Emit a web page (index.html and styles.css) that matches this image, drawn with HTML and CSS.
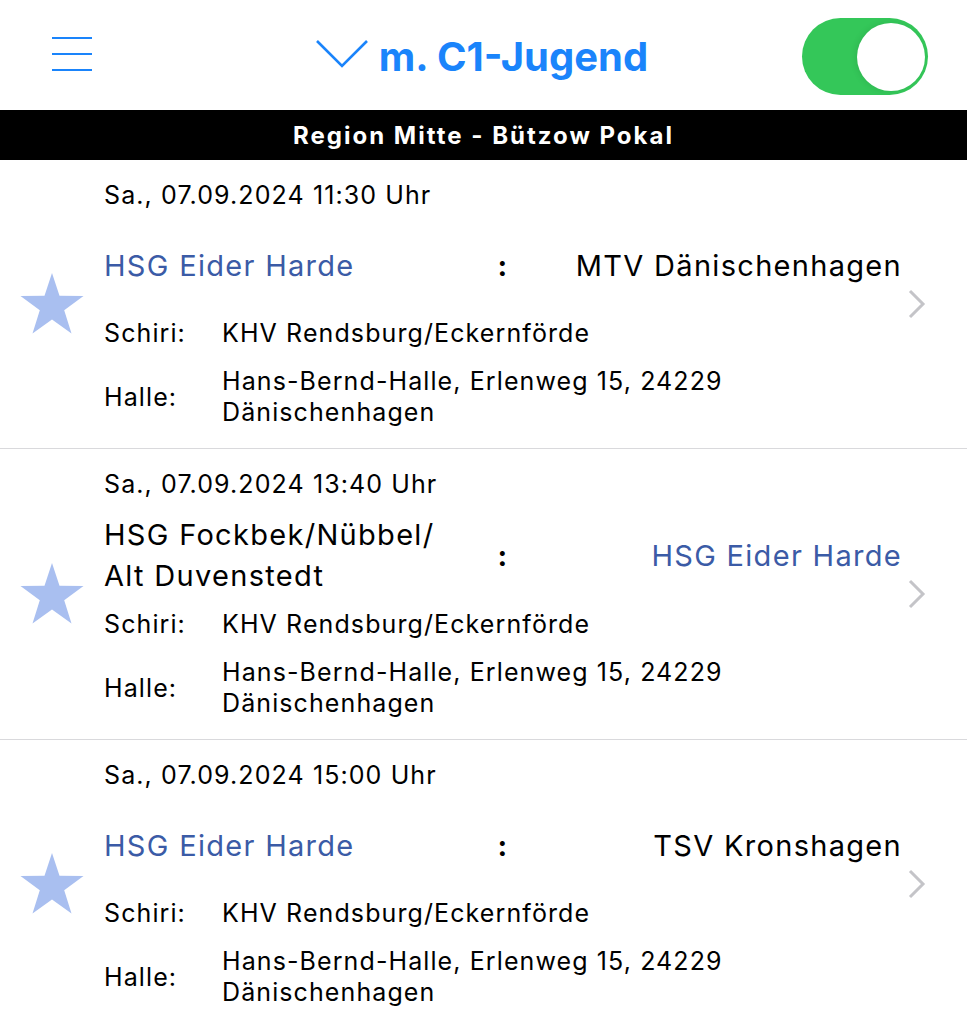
FILE: index.html
```html
<!DOCTYPE html>
<html lang="de">
<head>
    <meta charset="UTF-8">
    <meta name="viewport" content="width=device-width, initial-scale=1.0">
    <title>Spielplan</title>
    <link rel="stylesheet" href="styles.css">
</head>
<body>
    <div class="topbar">
        <button class="menu-button" aria-label="Menü">
            <span></span><span></span><span></span>
        </button>
        <div class="title">
            <svg class="title-chevron" width="54" height="30" viewBox="0 0 54 30">
                <path d="M2 2 L27 27 L52 2" fill="none" stroke="currentColor" stroke-width="2.6"/>
            </svg>
            <span>m. C1-Jugend</span>
        </div>
        <div class="toggle on"><div class="knob"></div></div>
    </div>

    <div class="section-bar">Region Mitte - Bützow Pokal</div>

    <div class="game-list">
        <div class="game">
            <svg class="star" width="64" height="62" viewBox="0 0 64 62">
                <path d="M32 0 L39.5 22.8 L63.5 23 L44.2 37.3 L51.5 60.5 L32 46.5 L12.5 60.5 L19.8 37.3 L0.5 23 L24.5 22.8 Z"/>
            </svg>
            <div class="game-body">
                <div class="date">Sa., 07.09.2024 11:30 Uhr</div>
                <div class="teams">
                    <div class="team home own">HSG Eider Harde</div>
                    <div class="colon">:</div>
                    <div class="team away">MTV Dänischenhagen</div>
                </div>
                <div class="info schiri">
                    <div class="label">Schiri:</div>
                    <div class="value">KHV Rendsburg/Eckernförde</div>
                </div>
                <div class="info halle">
                    <div class="label">Halle:</div>
                    <div class="value">Hans-Bernd-Halle, Erlenweg 15, 24229 Dänischenhagen</div>
                </div>
            </div>
            <svg class="disclosure" width="18" height="30" viewBox="0 0 18 30">
                <path d="M2 2 L15 15 L2 28" fill="none" stroke="currentColor" stroke-width="3"/>
            </svg>
        </div>

        <div class="game">
            <svg class="star" width="64" height="62" viewBox="0 0 64 62">
                <path d="M32 0 L39.5 22.8 L63.5 23 L44.2 37.3 L51.5 60.5 L32 46.5 L12.5 60.5 L19.8 37.3 L0.5 23 L24.5 22.8 Z"/>
            </svg>
            <div class="game-body">
                <div class="date">Sa., 07.09.2024 13:40 Uhr</div>
                <div class="teams">
                    <div class="team home">HSG Fockbek/Nübbel/ Alt Duvenstedt</div>
                    <div class="colon">:</div>
                    <div class="team away own">HSG Eider Harde</div>
                </div>
                <div class="info schiri">
                    <div class="label">Schiri:</div>
                    <div class="value">KHV Rendsburg/Eckernförde</div>
                </div>
                <div class="info halle">
                    <div class="label">Halle:</div>
                    <div class="value">Hans-Bernd-Halle, Erlenweg 15, 24229 Dänischenhagen</div>
                </div>
            </div>
            <svg class="disclosure" width="18" height="30" viewBox="0 0 18 30">
                <path d="M2 2 L15 15 L2 28" fill="none" stroke="currentColor" stroke-width="3"/>
            </svg>
        </div>

        <div class="game">
            <svg class="star" width="64" height="62" viewBox="0 0 64 62">
                <path d="M32 0 L39.5 22.8 L63.5 23 L44.2 37.3 L51.5 60.5 L32 46.5 L12.5 60.5 L19.8 37.3 L0.5 23 L24.5 22.8 Z"/>
            </svg>
            <div class="game-body">
                <div class="date">Sa., 07.09.2024 15:00 Uhr</div>
                <div class="teams">
                    <div class="team home own">HSG Eider Harde</div>
                    <div class="colon">:</div>
                    <div class="team away">TSV Kronshagen</div>
                </div>
                <div class="info schiri">
                    <div class="label">Schiri:</div>
                    <div class="value">KHV Rendsburg/Eckernförde</div>
                </div>
                <div class="info halle">
                    <div class="label">Halle:</div>
                    <div class="value">Hans-Bernd-Halle, Erlenweg 15, 24229 Dänischenhagen</div>
                </div>
            </div>
            <svg class="disclosure" width="18" height="30" viewBox="0 0 18 30">
                <path d="M2 2 L15 15 L2 28" fill="none" stroke="currentColor" stroke-width="3"/>
            </svg>
        </div>
    </div>
</body>
</html>
```

FILE: styles.css
```css
:root {
    --ios-blue: #1a84fb;
    --ios-green: #34c759;
    --team-blue: #3b5ba6;
    --star-blue: #a9bff0;
    --separator: #d9d9dc;
    --text-color: #000;
}

* {
    box-sizing: border-box;
}

body {
    margin: 0;
    font-family: Inter, 'Liberation Sans', Arial, sans-serif;
    color: var(--text-color);
    background: #fff;
}

.topbar {
    height: 110px;
    display: grid;
    grid-template-columns: 1fr auto 1fr;
    align-items: center;
}

.menu-button {
    justify-self: start;
    width: 40px;
    height: 34px;
    padding: 0;
    margin: -2px 0 0 52px;
    border: none;
    background: none;
    display: flex;
    flex-direction: column;
    justify-content: space-between;
}

.menu-button span {
    display: block;
    height: 2px;
    width: 40px;
    background: var(--ios-blue);
}

.title {
    display: flex;
    align-items: center;
    gap: 10px;
    color: var(--ios-blue);
    font-size: 40px;
    font-weight: 700;
    margin: 2px 4px 0 0;
}

.title-chevron {
    margin-top: -4px;
}

.toggle {
    justify-self: end;
    width: 126px;
    height: 77px;
    margin: 2px 39px 0 0;
    border-radius: 40px;
    background: var(--ios-green);
    position: relative;
}

.toggle .knob {
    position: absolute;
    top: 5px;
    right: 3px;
    width: 68px;
    height: 68px;
    border-radius: 50%;
    background: #fff;
    box-shadow: -2px 0 6px rgba(0,0,0,0.08);
}

.section-bar {
    height: 50px;
    background: #000;
    color: #fff;
    font-size: 24px;
    font-weight: 700;
    letter-spacing: 2px;
    display: flex;
    align-items: center;
    justify-content: center;
}

.game {
    display: flex;
    align-items: center;
    padding: 20px 0 20px 20px;
    border-bottom: 1px solid var(--separator);
}

.star {
    flex: none;
    fill: var(--star-blue);
    margin-right: 20px;
}

.game-body {
    flex: 1;
    display: flex;
    flex-direction: column;
}

.disclosure {
    flex: none;
    color: #c4c4c8;
    margin: 0 41px 0 6px;
}

.date {
    font-size: 25px;
    line-height: 30px;
    letter-spacing: 1.1px;
}

.teams {
    display: grid;
    grid-template-columns: 1fr auto 1fr;
    align-items: center;
    min-height: 80px;
    margin-top: 15px;
    font-size: 29px;
    line-height: 41px;
    letter-spacing: 1.3px;
}

.team.home {
    padding-right: 40px;
}

.team.away {
    text-align: right;
}

.team.own {
    color: var(--team-blue);
}

.colon {
    font-weight: 700;
    padding: 0 14px;
}

.info {
    display: flex;
    align-items: center;
    font-size: 25px;
    letter-spacing: 1.1px;
}

.info .label {
    width: 118px;
    flex: none;
}

.schiri {
    line-height: 30px;
    margin-top: 13px;
}

.halle {
    line-height: 31px;
    margin-top: 18px;
}
```
